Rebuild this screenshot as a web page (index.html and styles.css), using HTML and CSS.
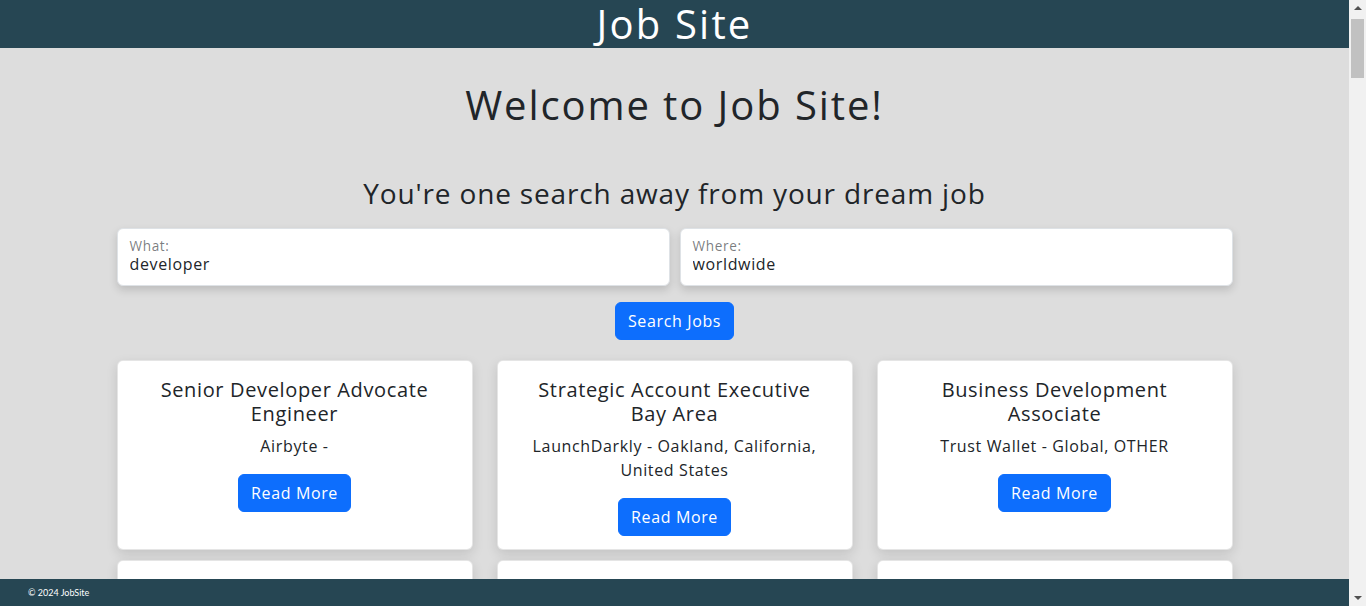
FILE: index.html
```html
<!DOCTYPE html>
<html lang="en">
<head>
<meta charset="utf-8">
<title>Job Site</title>
<link rel="stylesheet" href="styles.css">
</head>
<body>
<header class="site-header">
  <h1 class="brand">Job Site</h1>
</header>
<main class="container">
  <h1 class="welcome">Welcome to Job Site!</h1>
  <h3 class="tagline">You're one search away from your dream job</h3>
  <form class="search">
    <div class="fields">
      <label class="field">
        <span class="field-label">What:</span>
        <input class="field-input" type="text" value="developer">
      </label>
      <label class="field">
        <span class="field-label">Where:</span>
        <input class="field-input" type="text" value="worldwide">
      </label>
    </div>
    <div class="search-actions">
      <button type="button" class="btn">Search Jobs</button>
    </div>
  </form>
  <section class="jobs">
    <article class="card">
      <h5 class="card-title">Senior Developer Advocate Engineer</h5>
      <p class="card-text">Airbyte -</p>
      <button type="button" class="btn">Read More</button>
    </article>
    <article class="card">
      <h5 class="card-title">Strategic Account Executive Bay Area</h5>
      <p class="card-text">LaunchDarkly - Oakland, California, United States</p>
      <button type="button" class="btn">Read More</button>
    </article>
    <article class="card">
      <h5 class="card-title">Business Development Associate</h5>
      <p class="card-text">Trust Wallet - Global, OTHER</p>
      <button type="button" class="btn">Read More</button>
    </article>
    <article class="card">
      <h5 class="card-title">Full Stack Developer</h5>
      <p class="card-text">Remote - Worldwide</p>
      <button type="button" class="btn">Read More</button>
    </article>
    <article class="card">
      <h5 class="card-title">Frontend Engineer</h5>
      <p class="card-text">Remote - Europe</p>
      <button type="button" class="btn">Read More</button>
    </article>
    <article class="card">
      <h5 class="card-title">Backend Developer</h5>
      <p class="card-text">Remote - Americas</p>
      <button type="button" class="btn">Read More</button>
    </article>
  </section>
</main>
<footer class="site-footer">
  <p class="copy">© 2024 JobSite</p>
</footer>
<div class="scrollbar" aria-hidden="true">
  <span class="sb-arrow sb-up"></span>
  <span class="sb-thumb"></span>
  <span class="sb-arrow sb-down"></span>
</div>
</body>
</html>
```

FILE: styles.css
```css
* { box-sizing: border-box; }
html, body { margin: 0; padding: 0; }
html { overflow: hidden; }
body {
  background: #dddddd;
  color: #212529;
  font-family: "Open Sans", "DejaVu Sans", sans-serif;
  font-size: 16px;
  line-height: 1.5;
  letter-spacing: 0.04em;
  margin-right: 17px;
}
.site-header {
  background: #264653;
  height: 48px;
  display: flex;
  justify-content: center;
  align-items: center;
}
.brand {
  margin: 0;
  color: #fff;
  font-weight: 400;
  font-size: 40px;
  line-height: 48px;
  letter-spacing: 0.055em;
}
.container {
  width: 1116px;
  margin: 0 auto;
  padding-bottom: 60px;
}
.welcome {
  margin: 33px 0 0;
  text-align: center;
  font-weight: 400;
  font-size: 40px;
  line-height: 48px;
  letter-spacing: 0.048em;
}
.tagline {
  margin: 48px 0 0;
  text-align: center;
  font-weight: 400;
  font-size: 28px;
  line-height: 33.6px;
  letter-spacing: 0.03em;
}
.search { margin-top: 17px; }
.fields {
  display: grid;
  grid-template-columns: 1fr 1fr;
  gap: 10px;
}
.field {
  display: flex;
  flex-direction: column;
  height: 58px;
  background: #fff;
  border: 1px solid #dee2e6;
  border-radius: 6px;
  box-shadow: 0 4px 8px rgba(0,0,0,0.15);
  padding: 8px 12px 0;
}
.field-label {
  font-size: 13.6px;
  line-height: 18px;
  color: rgba(33,37,41,0.6);
}
.field-input {
  border: 0;
  outline: 0;
  padding: 0;
  font: inherit;
  font-size: 16px;
  line-height: 19px;
  letter-spacing: 0.04em;
  color: #212529;
  background: transparent;
}
.search-actions {
  display: flex;
  justify-content: center;
  margin-top: 16px;
}
.btn {
  background: #0d6efd;
  color: #fff;
  border: 1px solid #0d6efd;
  border-radius: 6px;
  font: inherit;
  font-size: 16px;
  line-height: 24px;
  letter-spacing: 0.04em;
  padding: 6px 12px;
}
.jobs {
  margin-top: 20px;
  display: grid;
  grid-template-columns: repeat(3, 1fr);
  column-gap: 24px;
  row-gap: 10px;
}
.card {
  background: #fff;
  border: 1px solid rgba(0,0,0,0.1);
  border-radius: 6px;
  box-shadow: 0 4px 12px rgba(0,0,0,0.12);
  padding: 17px 16px 13px;
  text-align: center;
  display: flex;
  flex-direction: column;
  align-items: center;
}
.card-title {
  margin: 0 0 8px;
  font-weight: 400;
  font-size: 20px;
  line-height: 24px;
  padding: 0 20px;
}
.card-text { margin: 0 0 16px; padding: 0; }
.site-footer {
  position: fixed;
  left: 0;
  right: 17px;
  bottom: 0;
  height: 27px;
  background: #264653;
  display: flex;
  align-items: center;
  padding-left: 28px;
}
.copy {
  margin: 0;
  color: #fff;
  font-family: "Lato", sans-serif;
  font-size: 9px;
  letter-spacing: 0;
}
.scrollbar {
  position: fixed;
  top: 0;
  right: 0;
  width: 17px;
  height: 100%;
  background: #f1f1f1;
  display: flex;
  flex-direction: column;
  align-items: center;
}
.sb-arrow {
  width: 0;
  height: 0;
  border-left: 4px solid transparent;
  border-right: 4px solid transparent;
}
.sb-up {
  margin-top: 6px;
  border-bottom: 4px solid #505050;
}
.sb-thumb {
  margin-top: 9px;
  width: 13px;
  height: 59px;
  background: #c1c1c1;
}
.sb-down {
  margin-top: auto;
  margin-bottom: 6px;
  border-top: 4px solid #505050;
}
```
